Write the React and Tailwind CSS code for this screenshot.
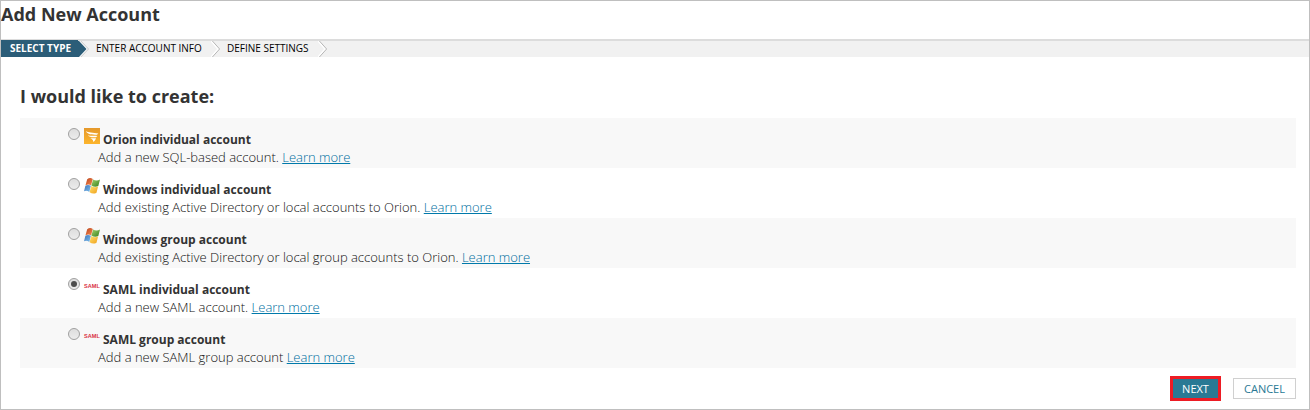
import React from "react";

function OrionIcon() {
  return (
    <svg width="16" height="16" viewBox="0 0 16 16">
      <defs>
        <linearGradient id="orion" x1="0" y1="0" x2="0" y2="1">
          <stop offset="0" stopColor="#e5982b" />
          <stop offset="1" stopColor="#fdb52c" />
        </linearGradient>
      </defs>
      <rect width="16" height="16" fill="url(#orion)" />
      <path d="M1.8 3.2C4.2 4.6 8.5 4.6 14.4 5.6L12.9 6.7C8 6.5 3.4 6.4 1.8 3.2Z" fill="#fff" />
      <path d="M4 7.3C6.6 8.2 9.8 7.5 13.4 7.9L12 9.2C8.4 9.5 5.2 9.4 4 7.3Z" fill="#fff" />
      <path d="M6.2 10C8.4 10.6 10 10 12 10.3C11.6 11.8 10.8 13 9.2 14C9.6 12.6 8.6 11.4 6.2 10Z" fill="#fff" />
    </svg>
  );
}

function WindowsIcon() {
  return (
    <svg width="16" height="16" viewBox="0 0 16 16" className="overflow-visible">
      <defs>
        <linearGradient id="wr" x1="0" y1="0" x2="1" y2="1"><stop offset="0" stopColor="#b9451f" /><stop offset="1" stopColor="#f88a4f" /></linearGradient>
        <linearGradient id="wg" x1="0" y1="0" x2="1" y2="1"><stop offset="0" stopColor="#a5d068" /><stop offset="1" stopColor="#34801f" /></linearGradient>
        <linearGradient id="wb" x1="0" y1="0" x2="1" y2="1"><stop offset="0" stopColor="#3f74b8" /><stop offset="1" stopColor="#7cc0f0" /></linearGradient>
        <linearGradient id="wy" x1="0" y1="0" x2="1" y2="1"><stop offset="0" stopColor="#ffe06a" /><stop offset="1" stopColor="#f0a01c" /></linearGradient>
      </defs>
      <path d="M3.2 1.2C5.1 -0.3 7 -0.3 8.8 1L7.1 7.3C5.3 6.1 3.4 6.2 1.5 7.3Z" fill="url(#wr)" />
      <path d="M9.1 1.4C11.2 2.8 13.6 2.9 16 1.6L14.3 8.1C12.1 9.2 9.6 9 7.4 7.6Z" fill="url(#wg)" />
      <path d="M1.4 7.7C3.2 6.6 5.1 6.7 6.9 7.8L5.3 13.9C3.6 12.6 1.7 12.3 0 13.2Z" fill="url(#wb)" />
      <path d="M7.2 8.1C9.4 9.6 11.8 9.7 14.1 8.6L12.5 14.7C10.3 16 7.8 15.8 5.6 14.3Z" fill="url(#wy)" />
    </svg>
  );
}

function SamlIcon() {
  return (
    <svg width="16" height="16" viewBox="0 0 16 16" className="overflow-visible">
      <text x="0" y="9.9" textLength="15.8" lengthAdjust="spacingAndGlyphs" fontFamily="Liberation Sans" fontWeight="700" fontSize="6" fill="#d9303f">SAML</text>
    </svg>
  );
}

function Radio({ checked }) {
  return (
    <span className="mt-2.5 flex h-3 w-3 shrink-0 items-center justify-center rounded-full border border-[#a0a0a0] bg-linear-to-b from-[#dedede] to-[#ececec]">
      {checked && <span className="h-1.5 w-1.5 rounded-full bg-[#4d4d4d]" />}
    </span>
  );
}

function Chevron({ first }) {
  return (
    <svg width="12" height="16" viewBox="0 0 12 16" className="shrink-0">
      {first ? (
        <>
          <path d="M0 0H3L11 8L3 16H0Z" fill="#fff" />
          <path d="M0 0H1L8.5 8L1 16H0Z" fill="#2b5d78" />
          <path d="M2.8 0L10.5 8L2.8 16" fill="none" stroke="#c4c4c4" />
        </>
      ) : (
        <>
          <path d="M0.4 0L7.4 8L0.4 16" fill="none" stroke="#fff" strokeWidth="2" />
          <path d="M1.4 0L8.6 8L1.4 16" fill="none" stroke="#b5b5b5" />
        </>
      )}
    </svg>
  );
}

const accounts = [
  { icon: OrionIcon, name: "Orion individual account", desc: "Add a new SQL-based account." },
  { icon: WindowsIcon, name: "Windows individual account", desc: "Add existing Active Directory or local accounts to Orion." },
  { icon: WindowsIcon, name: "Windows group account", desc: "Add existing Active Directory or local group accounts to Orion." },
  { icon: SamlIcon, name: "SAML individual account", desc: "Add a new SAML account.", checked: true },
  { icon: SamlIcon, name: "SAML group account", desc: "Add a new SAML group account" },
];

function AccountRow({ icon: Icon, name, desc, checked }) {
  return (
    <div className="flex h-[50px] pl-12 odd:bg-[#f8f8f8]">
      <Radio checked={checked} />
      <div className="ml-1 flex flex-col whitespace-nowrap">
        <div className="flex h-[29px] gap-[3px]">
          <span className="mt-[10px]"><Icon /></span>
          <span className="mt-[12px] text-[12px]/[20px] font-bold text-[#333]">{name}</span>
        </div>
        <div className="ml-3.5 text-[13px]/[20px] font-light tracking-[-0.005px] text-[#111]">
          {desc} <a href="#" className="text-[#006f9f] underline decoration-[#0079aa] decoration-1 underline-offset-1">Learn more</a>
        </div>
      </div>
    </div>
  );
}

export default function App() {
  return (
    <main className="flex h-[410px] w-[1310px] flex-col overflow-hidden border border-[#bfbfbf] bg-white font-['Open_Sans',sans-serif]">
      <h1 className="h-[38px] text-[18px]/[27px] font-bold whitespace-nowrap text-[#333]">Add New Account</h1>
      <nav className="flex h-[18px] border-t-2 border-[#dcdcdc] bg-[#f1f1f1] text-[10px]/[16px] whitespace-nowrap text-black">
        <span className="-mt-px h-[17px] w-[77px] bg-[#2b5d78] pl-[9px] font-bold text-white">SELECT TYPE</span>
        <Chevron first />
        <span className="-mt-px w-[121px] pl-[6px]">ENTER ACCOUNT INFO</span>
        <Chevron />
        <span className="-mt-px w-[95px] pl-[4px]">DEFINE SETTINGS</span>
        <Chevron />
      </nav>
      <section className="pt-[26px] pr-[13px] pl-[19px]">
        <h2 className="h-[35px] text-[18px]/[27px] font-bold text-[#333]">I would like to create:</h2>
        <div>
          {accounts.map((a) => <AccountRow key={a.name} {...a} />)}
        </div>
        <div className="flex items-start justify-end gap-3 pt-2 text-[11px]">
          <button className="h-[25px] w-[51px] border-3 border-[#ed1c24] bg-[#297994] leading-[19px] text-white">NEXT</button>
          <button className="mt-[2px] h-[21px] w-[63px] border border-[#d0d0d0] bg-white leading-[19px] text-[#297994]">CANCEL</button>
        </div>
      </section>
    </main>
  );
}
